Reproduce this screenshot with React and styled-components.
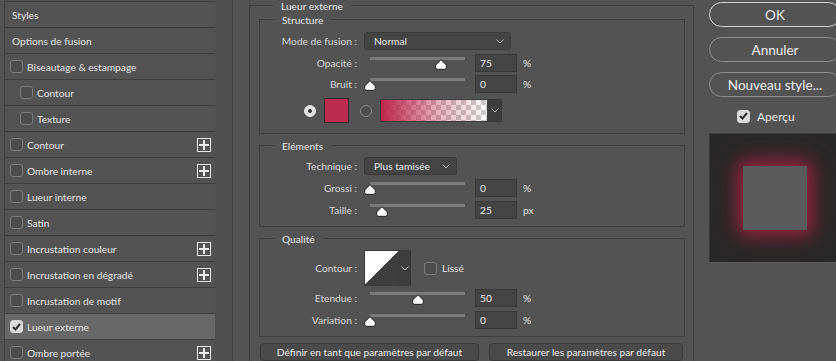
import React from "react";
import styled, { createGlobalStyle } from "styled-components";

const Global = createGlobalStyle`
  html, body { margin: 0; padding: 0; background: #535353; overflow: hidden; }
  body { font-family: Lato, "Noto Sans", sans-serif; font-size: 10.2px; color: #e2e2e2; }
  * { box-sizing: border-box; }
`;

const Page = styled.div`
  display: flex;
  width: 836px;
  height: 361px;
  overflow: hidden;
  background: #535353;
`;

/* ---------- sidebar ---------- */
const Sidebar = styled.div`
  width: 211px;
  margin-left: 4px;
  margin-top: 1px;
  border-left: 1px solid #424242;
  flex-shrink: 0;
  font-size: 10.2px;
`;
const Row = styled.div`
  display: flex;
  align-items: center;
  height: 26px;
  border-top: 1px solid #3d3d3d;
  padding-left: ${(p) => (p.$plain ? 7 : p.$indent ? 15 : 5)}px;
  padding-right: 4px;
  background: ${(p) => (p.$active ? "#686868" : "transparent")};
  color: #e4e4e4;
  white-space: nowrap;
`;
const RowText = styled.span`
  flex: 1;
  margin-left: ${(p) => (p.$after ? 4 : 0)}px;
`;
const Check = styled.span`
  display: inline-flex;
  align-items: center;
  justify-content: center;
  width: 13px;
  height: 13px;
  border-radius: 3px;
  border: 1px solid ${(p) => (p.$on ? "#d6d6d6" : "#7c7c7c")};
  background: ${(p) => (p.$on ? "#dadada" : "#4d4d4d")};
  flex-shrink: 0;
`;
const PlusBox = styled.span`
  width: 14px;
  height: 14px;
  border: 1px solid #e6e6e6;
  display: flex;
  align-items: center;
  justify-content: center;
`;
const Scroll = styled.div`
  width: 18px;
  flex-shrink: 0;
  background: #4f4f4f;
  border-right: 1px solid #424242;
`;

/* ---------- main ---------- */
const Main = styled.div`
  width: 476px;
  flex-shrink: 0;
  padding-left: 16px;
`;
const Outer = styled.div`
  width: 445px;
  margin-top: 5px;
  height: 400px;
  border: 1px solid #3e3e3e;
  border-bottom: none;
  padding: 0 8px 0 9px;
`;
const Legend = styled.div`
  width: fit-content;
  margin: -6px 0 0 ${(p) => p.$ml}px;
  padding: 0 ${(p) => p.$pad}px;
  height: 13px;
  line-height: 13px;
  background: #535353;
  color: #e6e6e6;
`;
const Group = styled.div`
  margin-top: ${(p) => p.$mt}px;
  border: 1px solid #3e3e3e;
  padding-bottom: ${(p) => p.$pb}px;
`;
const FormRow = styled.div`
  display: flex;
  align-items: center;
  height: ${(p) => p.$h || 18}px;
  margin-top: ${(p) => p.$mt}px;
  padding-left: ${(p) => p.$pl || 0}px;
`;
const Label = styled.div`
  width: 97px;
  text-align: right;
  margin-right: 7px;
  color: #d6d6d6;
  white-space: nowrap;
`;
const Select = styled.div`
  width: ${(p) => p.$w}px;
  height: 18px;
  display: flex;
  align-items: center;
  justify-content: space-between;
  padding: 0 6px 0 9px;
  background: #444444;
  border: 1px solid #3a3a3a;
  border-radius: 3px;
  color: #ececec;
`;
const SliderBox = styled.div`
  position: relative;
  width: 107px;
  height: 18px;
  flex-shrink: 0;
`;
const Track = styled.div`
  margin: 3px 0 0 6px;
  width: 95px;
  height: 3px;
  background: #7a7a7a;
`;
const Thumb = styled.svg`
  position: absolute;
  top: 5px;
  width: 12px;
  height: 11px;
`;
const NumInput = styled.div`
  width: 42px;
  height: 18px;
  margin-left: 4px;
  padding-left: 4px;
  display: flex;
  align-items: center;
  background: #444444;
  border: 1px solid #383838;
  color: #ececec;
`;
const Unit = styled.span`
  margin-left: 6px;
  color: #e0e0e0;
`;
const Radio = styled.span`
  width: 12px;
  height: 12px;
  border-radius: 50%;
  flex-shrink: 0;
  display: flex;
  align-items: center;
  justify-content: center;
  border: 1px solid ${(p) => (p.$on ? "#e2e2e2" : "#8a8a8a")};
  background: ${(p) => (p.$on ? "#e2e2e2" : "#4d4d4d")};
  margin-right: ${(p) => p.$mr}px;
`;
const Dot = styled.span`
  width: 4px;
  height: 4px;
  border-radius: 50%;
  background: #333;
`;
const Swatch = styled.div`
  width: 25px;
  height: 25px;
  background: #bd2a4f;
  border: 1px solid #2b2b2b;
  margin-right: 11px;
`;
const Gradient = styled.div`
  width: 108px;
  height: 23px;
  background:
    linear-gradient(to right, rgba(190, 38, 76, 1), rgba(190, 38, 76, 0.35) 55%, rgba(190, 38, 76, 0)),
    conic-gradient(#ffffff 25%, #cccccc 0 50%, #ffffff 0 75%, #cccccc 0) 0 0 / 10px 10px;
  border: 1px solid #3a3a3a;
`;
const Drop = styled.div`
  width: ${(p) => p.$w}px;
  height: ${(p) => p.$h}px;
  background: #3d3d3d;
  border: 1px solid #3a3a3a;
  border-left: none;
  display: flex;
  align-items: center;
  justify-content: center;
`;
const ContourBox = styled.div`
  width: 36px;
  height: 36px;
  border: 1px solid #3a3a3a;
  background: linear-gradient(to bottom right, #ffffff 50%, #3e3e3e 50%);
`;
const LisseCheck = styled(Check)`
  margin-left: 13px;
  margin-right: 5px;
`;
const ButtonRow = styled.div`
  display: flex;
  gap: 10px;
  margin-top: 6px;
  padding-left: 1px;
`;
const FlatButton = styled.div`
  width: ${(p) => p.$w}px;
  height: 18px;
  display: flex;
  align-items: center;
  justify-content: center;
  background: #4a4a4a;
  border: 1px solid #3a3a3a;
  border-radius: 4px;
  color: #ececec;
  white-space: nowrap;
`;

/* ---------- right column ---------- */
const Side = styled.div`
  width: 132px;
  flex-shrink: 0;
  padding-top: 2px;
  display: flex;
  flex-direction: column;
`;
const PillButton = styled.div`
  height: 25px;
  margin-bottom: 10px;
  border-radius: 13px;
  border: ${(p) => (p.$primary ? "1.5px solid #d2d2d2" : "1px solid #8e8e8e")};
  display: flex;
  align-items: center;
  justify-content: center;
  font-size: 13.5px;
  color: #ececec;
`;
const Preview = styled.div`
  margin-top: 2px;
  height: 14px;
  padding-left: 28px;
  display: flex;
  align-items: center;
  font-size: 12px;
  color: #e6e6e6;
`;
const PreviewLabel = styled.span`
  margin-left: 7px;
`;
const PreviewBox = styled.div`
  margin-top: 10px;
  height: 130px;
  background: #282828;
  border: 1px solid #3c3c3c;
  border-bottom-color: #5e5e5e;
  display: flex;
  align-items: center;
  justify-content: center;
`;
const PreviewSquare = styled.div`
  width: 64px;
  height: 64px;
  background: #5a5a5a;
  box-shadow: 0 0 16px 4px rgba(175, 36, 70, 0.8), 0 0 30px 8px rgba(140, 28, 56, 0.35);
`;

const Chevron = ({ color = "#bdbdbd" }) => (
  <svg width="8" height="5" viewBox="0 0 8 5">
    <path d="M0.5 0.5 L4 4 L7.5 0.5" fill="none" stroke={color} strokeWidth="1" />
  </svg>
);

const Tick = () => (
  <svg width="9" height="8" viewBox="0 0 9 8">
    <path d="M1 4 L3.5 6.5 L8 1" fill="none" stroke="#2e2e2e" strokeWidth="2" />
  </svg>
);

const Plus = () => (
  <PlusBox>
    <svg width="10" height="10" viewBox="0 0 10 10">
      <path d="M5 0 V10 M0 5 H10" stroke="#ececec" strokeWidth="2" />
    </svg>
  </PlusBox>
);

const Slider = ({ value }) => (
  <SliderBox>
    <Track />
    <Thumb viewBox="0 0 12 11" style={{ left: 6 + value * 95 - 6 }}>
      <path d="M6 0.7 L11.3 6 L11.3 8.5 Q11.3 10.3 9.5 10.3 L2.5 10.3 Q0.7 10.3 0.7 8.5 L0.7 6 Z" fill="#ffffff" stroke="#1e1e1e" strokeWidth="1" />
    </Thumb>
  </SliderBox>
);

const SliderRow = ({ label, value, num, unit, mt }) => (
  <FormRow $mt={mt}>
    <Label>{label}</Label>
    <Slider value={value} />
    <NumInput>{num}</NumInput>
    <Unit>{unit}</Unit>
  </FormRow>
);

const styles = [
  { t: "Styles", plain: true },
  { t: "Options de fusion", plain: true },
  { t: "Biseautage & estampage" },
  { t: "Contour", indent: true },
  { t: "Texture", indent: true },
  { t: "Contour", plus: true },
  { t: "Ombre interne", plus: true },
  { t: "Lueur interne" },
  { t: "Satin" },
  { t: "Incrustation couleur", plus: true },
  { t: "Incrustation en dégradé", plus: true },
  { t: "Incrustation de motif" },
  { t: "Lueur externe", on: true },
  { t: "Ombre portée", plus: true },
];

export default function App() {
  return (
    <>
      <Global />
      <Page>
        <Sidebar>
          {styles.map((s, i) => (
            <Row key={i} $plain={s.plain} $indent={s.indent} $active={s.on}>
              {!s.plain && <Check $on={s.on}>{s.on && <Tick />}</Check>}
              <RowText $after={!s.plain}>{s.t}</RowText>
              {s.plus && <Plus />}
            </Row>
          ))}
        </Sidebar>
        <Scroll />
        <Main>
          <Outer>
            <Legend $ml={15} $pad={7}>Lueur externe</Legend>
            <Group $mt={6} $pb={10}>
              <Legend $ml={14} $pad={8}>Structure</Legend>
              <FormRow $mt={5}>
                <Label>Mode de fusion :</Label>
                <Select $w={147}>
                  <span>Normal</span>
                  <Chevron />
                </Select>
              </FormRow>
              <SliderRow label="Opacité :" value={0.75} num="75" unit="%" mt={4} />
              <SliderRow label="Bruit :" value={0} num="0" unit="%" mt={3} />
              <FormRow $mt={5} $h={25} $pl={44}>
                <Radio $on $mr={8}>
                  <Dot />
                </Radio>
                <Swatch />
                <Radio $mr={8} />
                <Gradient />
                <Drop $w={14} $h={23}>
                  <Chevron />
                </Drop>
              </FormRow>
            </Group>
            <Group $mt={11} $pb={7}>
              <Legend $ml={14} $pad={8}>Eléments</Legend>
              <FormRow $mt={4}>
                <Label>Technique :</Label>
                <Select $w={93}>
                  <span>Plus tamisée</span>
                  <Chevron />
                </Select>
              </FormRow>
              <SliderRow label="Grossi :" value={0} num="0" unit="%" mt={4} />
              <SliderRow label="Taille :" value={0.13} num="25" unit="px" mt={4} />
            </Group>
            <Group $mt={11} $pb={7}>
              <Legend $ml={14} $pad={8}>Qualité</Legend>
              <FormRow $mt={4} $h={36}>
                <Label>Contour :</Label>
                <ContourBox />
                <Drop $w={11} $h={36}>
                  <Chevron />
                </Drop>
                <LisseCheck />
                <span>Lissé</span>
              </FormRow>
              <SliderRow label="Etendue :" value={0.5} num="50" unit="%" mt={3} />
              <SliderRow label="Variation :" value={0} num="0" unit="%" mt={4} />
            </Group>
            <ButtonRow>
              <FlatButton $w={219}>Définir en tant que paramètres par défaut</FlatButton>
              <FlatButton $w={194}>Restaurer les paramètres par défaut</FlatButton>
            </ButtonRow>
          </Outer>
        </Main>
        <Side>
          <PillButton $primary>OK</PillButton>
          <PillButton>Annuler</PillButton>
          <PillButton>Nouveau style...</PillButton>
          <Preview>
            <Check $on>
              <Tick />
            </Check>
            <PreviewLabel>Aperçu</PreviewLabel>
          </Preview>
          <PreviewBox>
            <PreviewSquare />
          </PreviewBox>
        </Side>
      </Page>
    </>
  );
}
